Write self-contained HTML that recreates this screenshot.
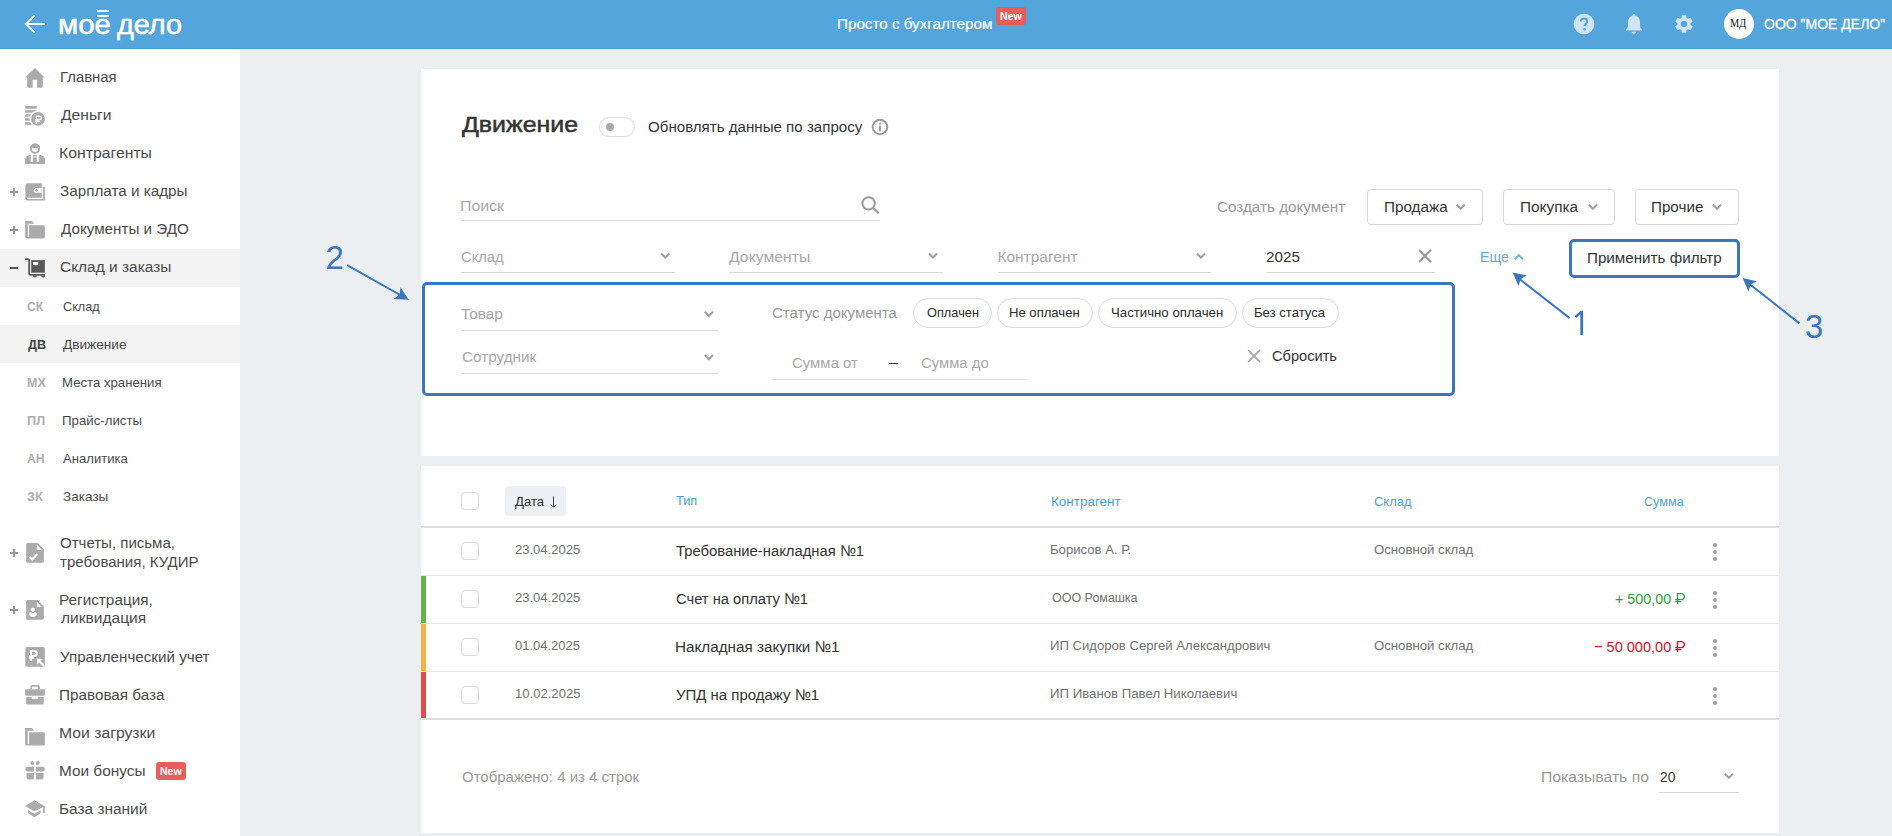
<!DOCTYPE html>
<html><head><meta charset="utf-8"><style>
html,body{margin:0;padding:0;width:1892px;height:836px;overflow:hidden;background:#ebeff1}
body{position:relative;font-family:'Liberation Sans',sans-serif}
.t{position:absolute;white-space:pre;transform-origin:0 0}
svg{display:block}
</style></head><body>
<div style="position:absolute;left:0px;top:0px;width:1892px;height:49px;background:#54a5dc"></div>
<div style="position:absolute;left:0px;top:48px;width:1892px;height:1px;background:#4a9fd8"></div>
<svg style="position:absolute;left:22px;top:12px" width="26" height="24" viewBox="0 0 26 24"><path d="M12.6 3.4 L4 12 L12.6 20.6 M4 12 H23" fill="none" stroke="#fff" stroke-width="2"/></svg>
<div class="t" id="t0" style="left:58.15px;top:5.32px;font-size:28.5px;line-height:39px;font-family:'Liberation Sans',sans-serif;font-weight:400;color:#fff;transform:scaleX(1.0287);-webkit-text-stroke:0.6px #fff;">мое</div>
<div class="t" id="t1" style="left:117.21px;top:5.32px;font-size:28.5px;line-height:39px;font-family:'Liberation Sans',sans-serif;font-weight:400;color:#fff;transform:scaleX(1.0105);-webkit-text-stroke:0.6px #fff;">дело</div>
<div style="position:absolute;left:97px;top:10px;width:12px;height:2px;background:#fff"></div>
<div style="position:absolute;left:97px;top:14.6px;width:12px;height:2.0000000000000018px;background:#fff"></div>
<div class="t" id="t2" style="left:837.08px;top:13.23px;font-size:15.5px;line-height:22px;font-family:'Liberation Sans',sans-serif;font-weight:400;color:#fff;transform:scaleX(0.9805);-webkit-text-stroke:0.2px #fff;">Просто с бухгалтером</div>
<div style="position:absolute;left:996px;top:7px;width:30px;height:18px;background:#e5605c;border-radius:3px"></div>
<div class="t" id="t3" style="left:999.91px;top:7.59px;font-size:11px;line-height:16px;font-family:'Liberation Sans',sans-serif;font-weight:700;color:#fff;transform:scaleX(0.9661);">New</div>
<svg style="position:absolute;left:1573px;top:13px" width="22" height="22" viewBox="0 0 22 22"><circle cx="11" cy="11" r="10.3" fill="#cfe4f5"/><path d="M7.8 8.6 C7.8 6.6 9.2 5.4 11 5.4 C12.9 5.4 14.2 6.6 14.2 8.3 C14.2 10.4 11.6 10.6 11.6 13" fill="none" stroke="#54a5dc" stroke-width="2"/><circle cx="11.6" cy="16.2" r="1.2" fill="#54a5dc"/></svg>
<svg style="position:absolute;left:1624px;top:13px" width="20" height="22" viewBox="0 0 20 22"><path d="M10 1 C11 1 11.3 1.8 11.3 2.4 C14.3 3.2 16 5.8 16 9 V14.2 L18.2 16.6 V17.6 H1.8 V16.6 L4 14.2 V9 C4 5.8 5.7 3.2 8.7 2.4 C8.7 1.8 9 1 10 1 Z" fill="#cfe4f5"/><path d="M7.6 18.8 H12.4 C12.2 20 11.2 20.8 10 20.8 C8.8 20.8 7.8 20 7.6 18.8Z" fill="#cfe4f5"/></svg>
<svg style="position:absolute;left:1673px;top:13px" width="22" height="22" viewBox="0 0 24 24"><path fill="#cfe4f5" d="M19.14 12.94c.04-.3.06-.61.06-.94 0-.32-.02-.64-.07-.94l2.03-1.58a.49.49 0 0 0 .12-.61l-1.92-3.32a.488.488 0 0 0-.59-.22l-2.39.96c-.5-.38-1.03-.7-1.62-.94l-.36-2.54a.484.484 0 0 0-.48-.41h-3.84c-.24 0-.43.17-.47.41l-.36 2.54c-.59.24-1.13.57-1.62.94l-2.39-.96c-.22-.08-.47 0-.59.22L2.74 8.87c-.12.21-.08.47.12.61l2.03 1.58c-.05.3-.09.63-.09.94s.02.64.07.94l-2.03 1.58a.49.49 0 0 0-.12.61l1.92 3.32c.12.22.37.29.59.22l2.39-.96c.5.38 1.03.7 1.62.94l.36 2.54c.05.24.24.41.48.41h3.84c.24 0 .44-.17.47-.41l.36-2.54c.59-.24 1.13-.56 1.62-.94l2.39.96c.22.08.47 0 .59-.22l1.92-3.32c.12-.22.07-.47-.12-.61l-2.01-1.58zM12 15.6c-1.98 0-3.6-1.62-3.6-3.6s1.62-3.6 3.6-3.6 3.6 1.62 3.6 3.6-1.62 3.6-3.6 3.6z"/></svg>
<div style="position:absolute;left:1724px;top:9px;width:30px;height:30px;border-radius:50%;background:#fff"></div>
<div class="t" id="t4" style="left:1729.97px;top:14.92px;font-size:11.5px;line-height:16px;font-family:'Liberation Serif',serif;font-weight:400;color:#111;transform:scaleX(0.9020);">МД</div>
<div class="t" id="t5" style="left:1764.37px;top:13.03px;font-size:15.5px;line-height:22px;font-family:'Liberation Sans',sans-serif;font-weight:400;color:#fff;transform:scaleX(0.9034);-webkit-text-stroke:0.3px #fff;">ООО "МОЕ ДЕЛО"</div>
<div style="position:absolute;left:0px;top:49px;width:240px;height:787px;background:#fff"></div>
<div style="position:absolute;left:0px;top:249px;width:240px;height:38px;background:#f3f3f3"></div>
<div style="position:absolute;left:0px;top:325px;width:240px;height:38px;background:#f3f3f3"></div>
<div class="t" id="t6" style="left:60.10px;top:66.33px;font-size:15.5px;line-height:22px;font-family:'Liberation Sans',sans-serif;font-weight:400;color:#4a4a4a;transform:scaleX(0.9594);">Главная</div>
<div class="t" id="t7" style="left:60.62px;top:104.33px;font-size:15.5px;line-height:22px;font-family:'Liberation Sans',sans-serif;font-weight:400;color:#4a4a4a;transform:scaleX(1.0085);">Деньги</div>
<div class="t" id="t8" style="left:59.44px;top:142.33px;font-size:15.5px;line-height:22px;font-family:'Liberation Sans',sans-serif;font-weight:400;color:#4a4a4a;transform:scaleX(1.0185);">Контрагенты</div>
<div class="t" id="t9" style="left:60.16px;top:180.33px;font-size:15.5px;line-height:22px;font-family:'Liberation Sans',sans-serif;font-weight:400;color:#4a4a4a;transform:scaleX(0.9836);">Зарплата и кадры</div>
<div class="t" id="t10" style="left:60.62px;top:218.33px;font-size:15.5px;line-height:22px;font-family:'Liberation Sans',sans-serif;font-weight:400;color:#4a4a4a;transform:scaleX(0.9807);">Документы и ЭДО</div>
<div class="t" id="t11" style="left:59.92px;top:256.33px;font-size:15.5px;line-height:22px;font-family:'Liberation Sans',sans-serif;font-weight:400;color:#4a4a4a;transform:scaleX(0.9973);">Склад и заказы</div>
<div class="t" id="t12" style="left:60.02px;top:531.83px;font-size:15.5px;line-height:22px;font-family:'Liberation Sans',sans-serif;font-weight:400;color:#4a4a4a;transform:scaleX(0.9688);">Отчеты, письма,</div>
<div class="t" id="t13" style="left:60.47px;top:550.73px;font-size:15.5px;line-height:22px;font-family:'Liberation Sans',sans-serif;font-weight:400;color:#4a4a4a;transform:scaleX(0.9696);">требования, КУДИР</div>
<div class="t" id="t14" style="left:59.47px;top:588.83px;font-size:15.5px;line-height:22px;font-family:'Liberation Sans',sans-serif;font-weight:400;color:#4a4a4a;transform:scaleX(0.9881);">Регистрация,</div>
<div class="t" id="t15" style="left:60.61px;top:607.43px;font-size:15.5px;line-height:22px;font-family:'Liberation Sans',sans-serif;font-weight:400;color:#4a4a4a;transform:scaleX(1.0020);">ликвидация</div>
<div class="t" id="t16" style="left:60.24px;top:645.93px;font-size:15.5px;line-height:22px;font-family:'Liberation Sans',sans-serif;font-weight:400;color:#4a4a4a;transform:scaleX(0.9787);">Управленческий учет</div>
<div class="t" id="t17" style="left:59.48px;top:683.93px;font-size:15.5px;line-height:22px;font-family:'Liberation Sans',sans-serif;font-weight:400;color:#4a4a4a;transform:scaleX(0.9853);">Правовая база</div>
<div class="t" id="t18" style="left:59.43px;top:721.93px;font-size:15.5px;line-height:22px;font-family:'Liberation Sans',sans-serif;font-weight:400;color:#4a4a4a;transform:scaleX(1.0147);">Мои загрузки</div>
<div class="t" id="t19" style="left:59.46px;top:759.93px;font-size:15.5px;line-height:22px;font-family:'Liberation Sans',sans-serif;font-weight:400;color:#4a4a4a;transform:scaleX(0.9912);">Мои бонусы</div>
<div class="t" id="t20" style="left:59.47px;top:797.93px;font-size:15.5px;line-height:22px;font-family:'Liberation Sans',sans-serif;font-weight:400;color:#4a4a4a;transform:scaleX(0.9934);">База знаний</div>
<div class="t" id="t21" style="left:27.19px;top:298.27px;font-size:12.5px;line-height:18px;font-family:'Liberation Sans',sans-serif;font-weight:700;color:#adadad;transform:scaleX(0.9666);">СК</div>
<div class="t" id="t22" style="left:63.12px;top:297.46px;font-size:13.4px;line-height:19px;font-family:'Liberation Sans',sans-serif;font-weight:400;color:#4a4a4a;transform:scaleX(0.9454);">Склад</div>
<div class="t" id="t23" style="left:27.56px;top:336.27px;font-size:12.5px;line-height:18px;font-family:'Liberation Sans',sans-serif;font-weight:700;color:#444;transform:scaleX(1.0093);">ДВ</div>
<div class="t" id="t24" style="left:62.73px;top:335.46px;font-size:13.4px;line-height:19px;font-family:'Liberation Sans',sans-serif;font-weight:400;color:#4a4a4a;transform:scaleX(1.0183);">Движение</div>
<div class="t" id="t25" style="left:26.88px;top:374.27px;font-size:12.5px;line-height:18px;font-family:'Liberation Sans',sans-serif;font-weight:700;color:#adadad;transform:scaleX(1.0029);">МХ</div>
<div class="t" id="t26" style="left:61.74px;top:373.46px;font-size:13.4px;line-height:19px;font-family:'Liberation Sans',sans-serif;font-weight:400;color:#4a4a4a;transform:scaleX(0.9841);">Места хранения</div>
<div class="t" id="t27" style="left:26.86px;top:412.27px;font-size:12.5px;line-height:18px;font-family:'Liberation Sans',sans-serif;font-weight:700;color:#adadad;transform:scaleX(1.0192);">ПЛ</div>
<div class="t" id="t28" style="left:61.74px;top:411.46px;font-size:13.4px;line-height:19px;font-family:'Liberation Sans',sans-serif;font-weight:400;color:#4a4a4a;transform:scaleX(0.9901);">Прайс-листы</div>
<div class="t" id="t29" style="left:27.36px;top:450.27px;font-size:12.5px;line-height:18px;font-family:'Liberation Sans',sans-serif;font-weight:700;color:#adadad;transform:scaleX(0.9709);">АН</div>
<div class="t" id="t30" style="left:62.80px;top:449.46px;font-size:13.4px;line-height:19px;font-family:'Liberation Sans',sans-serif;font-weight:400;color:#4a4a4a;transform:scaleX(0.9785);">Аналитика</div>
<div class="t" id="t31" style="left:27.29px;top:488.27px;font-size:12.5px;line-height:18px;font-family:'Liberation Sans',sans-serif;font-weight:700;color:#adadad;transform:scaleX(1.0191);">ЗК</div>
<div class="t" id="t32" style="left:63.32px;top:487.46px;font-size:13.4px;line-height:19px;font-family:'Liberation Sans',sans-serif;font-weight:400;color:#4a4a4a;transform:scaleX(1.0140);">Заказы</div>
<div style="position:absolute;left:10px;top:191.39999999999998px;width:8px;height:1.6000000000000227px;background:#999"></div>
<div style="position:absolute;left:13.2px;top:188.2px;width:1.6000000000000014px;height:8.0px;background:#999"></div>
<div style="position:absolute;left:10px;top:229.39999999999998px;width:8px;height:1.6000000000000227px;background:#999"></div>
<div style="position:absolute;left:13.2px;top:226.2px;width:1.6000000000000014px;height:8.0px;background:#999"></div>
<div style="position:absolute;left:10px;top:552.2px;width:8px;height:1.599999999999909px;background:#999"></div>
<div style="position:absolute;left:13.2px;top:549px;width:1.6000000000000014px;height:8px;background:#999"></div>
<div style="position:absolute;left:10px;top:609.2px;width:8px;height:1.599999999999909px;background:#999"></div>
<div style="position:absolute;left:13.2px;top:606px;width:1.6000000000000014px;height:8px;background:#999"></div>
<div style="position:absolute;left:10px;top:267.2px;width:8px;height:1.6000000000000227px;background:#555"></div>
<svg style="position:absolute;left:22px;top:64px" width="26" height="26" viewBox="0 0 26 26"><path d="M13 4 L22.6 13.5 H20.8 V21.4 C20.8 22.8 19.8 23.8 18.4 23.8 H15.2 V15.7 H10.7 V23.8 H7.5 C6.1 23.8 5.13 22.8 5.13 21.4 V13.5 H3.1 Z" fill="#ababab"/></svg>
<svg style="position:absolute;left:22px;top:102px" width="26" height="26" viewBox="0 0 26 26"><rect x="3.1" y="4.04" width="11.7" height="2.65" fill="#ababab"/><rect x="3.1" y="8.2" width="11.7" height="2.5" fill="#ababab"/><rect x="3.1" y="12.3" width="11.7" height="2.3" fill="#ababab"/><rect x="3.1" y="16.2" width="11.7" height="2.5" fill="#ababab"/><rect x="3.1" y="20.2" width="11.7" height="2.7" fill="#ababab"/><circle cx="16" cy="16.9" r="8.5" fill="#fff"/><circle cx="16" cy="16.9" r="6.85" fill="#ababab"/><path d="M14.45 21.8 V14.15 H17.1 C18.6 14.15 19.2 15 19.2 15.95 C19.2 16.9 18.6 17.75 17.1 17.75 H12.9 M12.9 19.45 H18" fill="none" stroke="#fff" stroke-width="1.45"/></svg>
<svg style="position:absolute;left:22px;top:140px" width="26" height="26" viewBox="0 0 26 26"><circle cx="13.06" cy="8.86" r="4.05" fill="none" stroke="#ababab" stroke-width="1.9"/><path d="M8.1 7.9 A5 5 0 0 1 18 7.9 Z" fill="#ababab"/><path d="M3.1 24 V20 C3.1 17.2 5.2 14.9 8.2 14.9 H17.9 C20.9 14.9 23 17.2 23 20 V24 Z" fill="#ababab"/><path d="M8.7 14.5 H11 V21.2 C11 21.7 10.6 22 10.1 22 H9.6 C9.1 22 8.7 21.7 8.7 21.2Z M14.8 14.5 H17.1 V21.2 C17.1 21.7 16.7 22 16.2 22 H15.7 C15.2 22 14.8 21.7 14.8 21.2Z" fill="#fff"/><rect x="11" y="16.5" width="3.8" height="0.9" fill="#fff"/></svg>
<svg style="position:absolute;left:22px;top:179px" width="26" height="26" viewBox="0 0 26 26"><path d="M5.4 4.2 H19.75 V18.7 H5 V19.9 H21.15 V8.1 H22.9 V21.6 H5.4 Q3.3 21.6 3.3 19.5 V6.3 Q3.3 4.2 5.4 4.2 Z" fill="#ababab"/><path d="M14.2 9 H19.75 V13.85 H14.2 C12.9 13.85 11.8 12.8 11.8 11.4 C11.8 10.05 12.9 9 14.2 9Z" fill="#fff"/><circle cx="14.5" cy="11.4" r="1.35" fill="#ababab"/></svg>
<svg style="position:absolute;left:22px;top:217px" width="26" height="26" viewBox="0 0 26 26"><path d="M3.1 4.04 H9.8 L12.3 6.7 H5.75 V19.9 H7.15 V8.24 H21.3 Q22.86 8.24 22.86 9.8 V19.9 Q22.86 21.6 21.1 21.6 H5.1 Q3.1 21.6 3.1 19.6 Z" fill="#ababab"/></svg>
<svg style="position:absolute;left:22px;top:255px" width="26" height="26" viewBox="0 0 26 26"><path d="M3.1 4.04 H6 Q7.15 4.04 7.15 5.2 V18.7 Q7.15 19.85 8.3 19.85 H22.9" fill="none" stroke="#595959" stroke-width="1.8"/><rect x="9.2" y="5.13" width="13.66" height="12.57" fill="#595959"/><rect x="11" y="7" width="5.2" height="3.1" fill="#fff"/><path d="M11 20.6 A1.95 1.95 0 0 0 14.9 20.6Z M19.2 20.6 A1.95 1.95 0 0 0 23.1 20.6Z" fill="#595959"/></svg>
<svg style="position:absolute;left:22px;top:540px" width="26" height="26" viewBox="0 0 26 26"><path d="M5.7 3.1 H15.7 L21.8 9.3 V21.2 Q21.8 22.7 20.3 22.7 H5.7 Q4.2 22.7 4.2 21.2 V4.6 Q4.2 3.1 5.7 3.1Z" fill="#ababab"/><path d="M14.9 4.7 V10.1 H19.9Z" fill="#fff"/><path d="M7.7 17.1 L10.1 19.4 L15.4 13.9" fill="none" stroke="#fff" stroke-width="2.1"/></svg>
<svg style="position:absolute;left:22px;top:597px" width="26" height="26" viewBox="0 0 26 26"><path d="M5.7 3.1 H15.7 L21.8 9.3 V21.2 Q21.8 22.7 20.3 22.7 H5.7 Q4.2 22.7 4.2 21.2 V4.6 Q4.2 3.1 5.7 3.1Z" fill="#ababab"/><path d="M14.9 4.7 V10.1 H19.9Z" fill="#fff"/><circle cx="10.9" cy="12.6" r="2.05" fill="#fff"/><path d="M6.8 17 C7 15.7 7.9 14.9 8.8 14.9 L10.9 16.5 L13 14.9 C13.9 14.9 14.8 15.7 14.95 17 C14.9 18.8 13 19.9 10.9 19.9 C8.8 19.9 6.8 18.8 6.8 17Z" fill="#fff"/></svg>
<svg style="position:absolute;left:22px;top:643px" width="26" height="26" viewBox="0 0 26 26"><rect x="3.27" y="4.04" width="19.6" height="19.76" rx="1.8" fill="#ababab"/><path d="M8.9 18 V8 H12.2 C14 8 14.9 9.1 14.9 10.45 C14.9 11.8 14 12.9 12.2 12.9 H6.85 M6.85 15 H12" fill="none" stroke="#fff" stroke-width="2"/><path d="M22 22.7 L16.3 17" stroke="#fff" stroke-width="2.1"/><path d="M14.9 15.55 L20.6 16 L15.1 21.6Z" fill="#fff"/></svg>
<svg style="position:absolute;left:22px;top:682px" width="26" height="26" viewBox="0 0 26 26"><path d="M9.2 7.3 V4.9 Q9.2 3.9 10.2 3.9 H16.1 Q17.1 3.9 17.1 4.9 V7.3" fill="none" stroke="#ababab" stroke-width="1.6"/><path d="M3.1 7.15 H22.86 V12.2 Q22.86 13.7 21.36 13.7 H4.6 Q3.1 13.7 3.1 12.2Z" fill="#ababab"/><path d="M4.2 15.1 H9.8 V17.1 H16.2 V15.1 H21.8 V21.05 Q21.8 22.55 20.3 22.55 H5.7 Q4.2 22.55 4.2 21.05Z" fill="#ababab"/></svg>
<svg style="position:absolute;left:22px;top:724px" width="26" height="26" viewBox="0 0 26 26"><path d="M3.1 4.04 H9.8 L12.3 6.7 H5.75 V19.9 H7.15 V8.24 H21.3 Q22.86 8.24 22.86 9.8 V19.9 Q22.86 21.6 21.1 21.6 H5.1 Q3.1 21.6 3.1 19.6 Z" fill="#ababab"/></svg>
<svg style="position:absolute;left:22px;top:758px" width="26" height="26" viewBox="0 0 26 26"><path d="M12 6.7 H10.1 A1.85 1.85 0 1 1 12 4.9Z M14 6.7 H15.9 A1.85 1.85 0 1 0 14 4.9Z" fill="#ababab"/><path d="M12 8.86 H5.6 Q3.27 8.86 3.27 11.18 Q3.27 13.5 5.6 13.5 H12Z M14 8.86 H20.5 Q22.86 8.86 22.86 11.18 Q22.86 13.5 20.5 13.5 H14Z" fill="#ababab"/><path d="M4.5 15.1 H12 V21.6 H7 Q4.5 21.6 4.5 19.1Z M14 15.1 H21.6 V19.1 Q21.6 21.6 19.1 21.6 H14Z" fill="#ababab"/></svg>
<svg style="position:absolute;left:22px;top:796px" width="26" height="26" viewBox="0 0 26 26"><path d="M3.1 10 L12.44 4.35 L22.86 10.2 L12.44 15.2Z" fill="#ababab"/><rect x="21.15" y="10" width="1.71" height="7" fill="#ababab"/><path d="M5.9 14.3 L12.44 17.7 L18.66 14.3 V17 L12.44 21.15 L5.9 17Z" fill="#ababab"/></svg>
<div style="position:absolute;left:156px;top:762px;width:30px;height:18px;background:#e5605c;border-radius:3px"></div>
<div class="t" id="t33" style="left:159.82px;top:762.99px;font-size:11px;line-height:16px;font-family:'Liberation Sans',sans-serif;font-weight:700;color:#fff;transform:scaleX(0.9569);">New</div>
<div style="position:absolute;left:240px;top:49px;width:1652px;height:787px;background:#ebeff1"></div>
<div style="position:absolute;left:240px;top:49px;width:1652px;height:1px;background:#f1f2f3"></div>
<div style="position:absolute;left:421px;top:69px;width:1358px;height:387px;background:#fff"></div>
<div style="position:absolute;left:421px;top:466px;width:1358px;height:367px;background:#fff"></div>
<div class="t" id="t34" style="left:462.39px;top:110.28px;font-size:22px;line-height:30px;font-family:'Liberation Sans',sans-serif;font-weight:400;color:#333;transform:scaleX(1.1316);-webkit-text-stroke:0.5px #333;">Движение</div>
<div style="position:absolute;left:599px;top:117px;width:36px;height:20px;border:1px solid #dcdcdc;border-radius:10px;box-sizing:border-box;background:#fff"></div>
<div style="position:absolute;left:606px;top:123px;width:8px;height:8px;border-radius:50%;background:#a9a9a9"></div>
<div class="t" id="t35" style="left:647.72px;top:115.53px;font-size:15.5px;line-height:22px;font-family:'Liberation Sans',sans-serif;font-weight:400;color:#333;transform:scaleX(0.9743);">Обновлять данные по запросу</div>
<svg style="position:absolute;left:871px;top:118px" width="18" height="18" viewBox="0 0 18 18"><circle cx="9" cy="9" r="7.3" fill="none" stroke="#9a9a9a" stroke-width="1.9"/><rect x="8.1" y="7.6" width="1.8" height="5.6" fill="#9a9a9a"/><rect x="8.1" y="4.7" width="1.8" height="1.8" fill="#9a9a9a"/></svg>
<div class="t" id="t36" style="left:460.32px;top:194.53px;font-size:15.5px;line-height:22px;font-family:'Liberation Sans',sans-serif;font-weight:400;color:#a8a8a8;transform:scaleX(1.0228);">Поиск</div>
<div style="position:absolute;left:461px;top:220px;width:419px;height:1.3000000000000114px;background:#dadada"></div>
<svg style="position:absolute;left:859px;top:195px" width="22" height="20" viewBox="0 0 22 20"><circle cx="9.6" cy="8.4" r="6.2" fill="none" stroke="#9a9a9a" stroke-width="2"/><path d="M14 12.8 L19.6 18.2" stroke="#9a9a9a" stroke-width="2.2"/></svg>
<div class="t" id="t37" style="left:1217.43px;top:196.33px;font-size:15.5px;line-height:22px;font-family:'Liberation Sans',sans-serif;font-weight:400;color:#999;transform:scaleX(0.9833);">Создать документ</div>
<div style="position:absolute;left:1367px;top:189px;width:116px;height:36px;border:1px solid #d9d9d9;border-radius:4px;box-sizing:border-box"></div>
<div class="t" id="t38" style="left:1384.08px;top:196.33px;font-size:15.5px;line-height:22px;font-family:'Liberation Sans',sans-serif;font-weight:400;color:#333;transform:scaleX(0.9833);">Продажа</div>
<svg style="position:absolute;left:0;top:0;overflow:visible" width="1" height="1"><path d="M1456.65 204.55 L1460.75 208.65 L1464.85 204.55" fill="none" stroke="#a0a0a0" stroke-width="2.1"/></svg>
<div style="position:absolute;left:1503px;top:189px;width:112px;height:36px;border:1px solid #d9d9d9;border-radius:4px;box-sizing:border-box"></div>
<div class="t" id="t39" style="left:1519.68px;top:196.33px;font-size:15.5px;line-height:22px;font-family:'Liberation Sans',sans-serif;font-weight:400;color:#333;transform:scaleX(0.9926);">Покупка</div>
<svg style="position:absolute;left:0;top:0;overflow:visible" width="1" height="1"><path d="M1588.75 204.55 L1592.85 208.65 L1596.95 204.55" fill="none" stroke="#a0a0a0" stroke-width="2.1"/></svg>
<div style="position:absolute;left:1635px;top:189px;width:104px;height:36px;border:1px solid #d9d9d9;border-radius:4px;box-sizing:border-box"></div>
<div class="t" id="t40" style="left:1650.78px;top:196.33px;font-size:15.5px;line-height:22px;font-family:'Liberation Sans',sans-serif;font-weight:400;color:#333;transform:scaleX(0.9800);">Прочие</div>
<svg style="position:absolute;left:0;top:0;overflow:visible" width="1" height="1"><path d="M1712.90 204.55 L1717.00 208.65 L1721.10 204.55" fill="none" stroke="#a0a0a0" stroke-width="2.1"/></svg>
<div class="t" id="t41" style="left:460.95px;top:246.13px;font-size:15.5px;line-height:22px;font-family:'Liberation Sans',sans-serif;font-weight:400;color:#a8a8a8;transform:scaleX(0.9515);">Склад</div>
<div style="position:absolute;left:461px;top:271.5px;width:214px;height:1.3000000000000114px;background:#dadada"></div>
<svg style="position:absolute;left:0;top:0;overflow:visible" width="1" height="1"><path d="M661.15 253.45 L665.25 257.55 L669.35 253.45" fill="none" stroke="#a0a0a0" stroke-width="2.1"/></svg>
<div class="t" id="t42" style="left:729.42px;top:246.13px;font-size:15.5px;line-height:22px;font-family:'Liberation Sans',sans-serif;font-weight:400;color:#a8a8a8;transform:scaleX(1.0173);">Документы</div>
<div style="position:absolute;left:729px;top:271.5px;width:214px;height:1.3000000000000114px;background:#dadada"></div>
<svg style="position:absolute;left:0;top:0;overflow:visible" width="1" height="1"><path d="M928.90 253.45 L933.00 257.55 L937.10 253.45" fill="none" stroke="#a0a0a0" stroke-width="2.1"/></svg>
<div class="t" id="t43" style="left:997.45px;top:246.13px;font-size:15.5px;line-height:22px;font-family:'Liberation Sans',sans-serif;font-weight:400;color:#a8a8a8;">Контрагент</div>
<div style="position:absolute;left:998px;top:271.5px;width:213px;height:1.3000000000000114px;background:#dadada"></div>
<svg style="position:absolute;left:0;top:0;overflow:visible" width="1" height="1"><path d="M1196.80 253.45 L1200.90 257.55 L1205.00 253.45" fill="none" stroke="#a0a0a0" stroke-width="2.1"/></svg>
<div class="t" id="t44" style="left:1266.19px;top:245.53px;font-size:15.5px;line-height:22px;font-family:'Liberation Sans',sans-serif;font-weight:400;color:#333;transform:scaleX(0.9813);">2025</div>
<div style="position:absolute;left:1266px;top:271.5px;width:169px;height:1.3000000000000114px;background:#dadada"></div>
<svg style="position:absolute;left:1418px;top:249px" width="14" height="14" viewBox="0 0 14 14"><path d="M1 1 L13 13 M13 1 L1 13" stroke="#9a9a9a" stroke-width="2"/></svg>
<div class="t" id="t45" style="left:1480.44px;top:246.43px;font-size:15.5px;line-height:22px;font-family:'Liberation Sans',sans-serif;font-weight:400;color:#5badde;transform:scaleX(0.9195);">Еще</div>
<svg style="position:absolute;left:0;top:0;overflow:visible" width="1" height="1"><path d="M1514.75 259.35 L1518.85 255.25 L1522.95 259.35" fill="none" stroke="#6cb4dc" stroke-width="2"/></svg>
<div style="position:absolute;left:1569px;top:239px;width:171px;height:39px;border:3px solid #3a77bf;border-radius:5px;box-sizing:border-box"></div>
<div class="t" id="t46" style="left:1586.68px;top:247.13px;font-size:15.5px;line-height:22px;font-family:'Liberation Sans',sans-serif;font-weight:400;color:#333;transform:scaleX(0.9798);">Применить фильтр</div>
<div style="position:absolute;left:422px;top:282px;width:1032.5px;height:113.5px;border:3px solid #3a77bf;border-radius:5px;box-sizing:border-box"></div>
<div class="t" id="t47" style="left:461.30px;top:303.13px;font-size:15.5px;line-height:22px;font-family:'Liberation Sans',sans-serif;font-weight:400;color:#a8a8a8;transform:scaleX(0.9901);">Товар</div>
<div style="position:absolute;left:461px;top:329.8px;width:258px;height:1.3000000000000114px;background:#dadada"></div>
<svg style="position:absolute;left:0;top:0;overflow:visible" width="1" height="1"><path d="M704.80 311.75 L708.90 315.85 L713.00 311.75" fill="none" stroke="#a0a0a0" stroke-width="2.1"/></svg>
<div class="t" id="t48" style="left:461.83px;top:346.23px;font-size:15.5px;line-height:22px;font-family:'Liberation Sans',sans-serif;font-weight:400;color:#a8a8a8;transform:scaleX(0.9861);">Сотрудник</div>
<div style="position:absolute;left:461px;top:372.6px;width:258px;height:1.2999999999999545px;background:#dadada"></div>
<svg style="position:absolute;left:0;top:0;overflow:visible" width="1" height="1"><path d="M704.80 355.05 L708.90 359.15 L713.00 355.05" fill="none" stroke="#a0a0a0" stroke-width="2.1"/></svg>
<div class="t" id="t49" style="left:772.03px;top:302.03px;font-size:15.5px;line-height:22px;font-family:'Liberation Sans',sans-serif;font-weight:400;color:#999;transform:scaleX(0.9696);">Статус документа</div>
<div style="position:absolute;left:913px;top:298px;width:79px;height:30px;border:1px solid #dcdcdc;border-radius:15px;box-sizing:border-box"></div>
<div class="t" id="t50" style="left:926.61px;top:303.36px;font-size:13.4px;line-height:19px;font-family:'Liberation Sans',sans-serif;font-weight:400;color:#2b2b2b;transform:scaleX(0.9538);">Оплачен</div>
<div style="position:absolute;left:997px;top:298px;width:95.5px;height:30px;border:1px solid #dcdcdc;border-radius:15px;box-sizing:border-box"></div>
<div class="t" id="t51" style="left:1009.24px;top:303.36px;font-size:13.4px;line-height:19px;font-family:'Liberation Sans',sans-serif;font-weight:400;color:#2b2b2b;transform:scaleX(0.9772);">Не оплачен</div>
<div style="position:absolute;left:1098px;top:298px;width:138.5px;height:30px;border:1px solid #dcdcdc;border-radius:15px;box-sizing:border-box"></div>
<div class="t" id="t52" style="left:1111.23px;top:303.36px;font-size:13.4px;line-height:19px;font-family:'Liberation Sans',sans-serif;font-weight:400;color:#2b2b2b;transform:scaleX(0.9866);">Частично оплачен</div>
<div style="position:absolute;left:1242px;top:298px;width:97px;height:30px;border:1px solid #dcdcdc;border-radius:15px;box-sizing:border-box"></div>
<div class="t" id="t53" style="left:1254.45px;top:303.36px;font-size:13.4px;line-height:19px;font-family:'Liberation Sans',sans-serif;font-weight:400;color:#2b2b2b;transform:scaleX(0.9783);">Без статуса</div>
<div class="t" id="t54" style="left:791.95px;top:352.03px;font-size:15.5px;line-height:22px;font-family:'Liberation Sans',sans-serif;font-weight:400;color:#a8a8a8;transform:scaleX(0.9640);">Сумма от</div>
<div style="position:absolute;left:888.5px;top:362.6px;width:9.100000000000023px;height:1.0px;background:#333"></div>
<div class="t" id="t55" style="left:921.24px;top:352.03px;font-size:15.5px;line-height:22px;font-family:'Liberation Sans',sans-serif;font-weight:400;color:#a8a8a8;transform:scaleX(0.9574);">Сумма до</div>
<div style="position:absolute;left:772px;top:378.5px;width:254px;height:1.3000000000000114px;background:#dadada"></div>
<svg style="position:absolute;left:1247px;top:349px" width="14" height="14" viewBox="0 0 14 14"><path d="M1.2 1.2 L12.8 12.8 M12.8 1.2 L1.2 12.8" stroke="#a6a6a6" stroke-width="1.7"/></svg>
<div class="t" id="t56" style="left:1272.44px;top:345.03px;font-size:15.5px;line-height:22px;font-family:'Liberation Sans',sans-serif;font-weight:400;color:#333;transform:scaleX(0.9430);">Сбросить</div>
<div class="t" id="t57" style="left:325.45px;top:235.97px;font-size:33px;line-height:44px;font-family:'Liberation Sans',sans-serif;font-weight:400;color:#3a77bf;">2</div>
<div class="t" id="t58" style="left:1805.19px;top:304.77px;font-size:33px;line-height:44px;font-family:'Liberation Sans',sans-serif;font-weight:400;color:#3a77bf;transform:scaleX(0.9922);">3</div>
<svg style="position:absolute;left:0;top:0;pointer-events:none" width="1892" height="836" viewBox="0 0 1892 836">
<path d="M347.2 265.2 L401 295.5" stroke="#3a77bf" stroke-width="2"/><path d="M408.8 299.7 L400.4 287.3 L399.8 294.2 L393.7 299Z" fill="#3a77bf"/>
<path d="M1569.6 318.1 L1519 278.5" stroke="#3a77bf" stroke-width="2"/><path d="M1580.3 335 V314.2 L1576.2 318.1 L1574.6 316.2 L1580.6 310.8 H1583.1 V335Z" fill="#3a77bf"/><path d="M1512.7 272.4 L1526.9 275.4 L1520.8 278.9 L1518.5 285.9Z" fill="#3a77bf"/>
<path d="M1799.5 323.4 L1749.5 284" stroke="#3a77bf" stroke-width="2"/><path d="M1742.6 278 L1756.8 281.3 L1750.6 284.4 L1748.4 291.6Z" fill="#3a77bf"/>
</svg>
<div style="position:absolute;left:461px;top:492px;width:18px;height:18px;border:1px solid #d9d9d9;border-radius:4px;box-sizing:border-box;background:#fff"></div>
<div style="position:absolute;left:505px;top:486px;width:61px;height:30px;background:#edf0f4;border-radius:4px"></div>
<div class="t" id="t59" style="left:514.93px;top:491.56px;font-size:13.4px;line-height:19px;font-family:'Liberation Sans',sans-serif;font-weight:400;color:#2b2b2b;transform:scaleX(0.9797);">Дата</div>
<svg style="position:absolute;left:549px;top:495px" width="9" height="14" viewBox="0 0 9 14"><path d="M4.5 1.2 V12.2 M2 9.6 L4.5 12.2 L7 9.6" fill="none" stroke="#444" stroke-width="1"/></svg>
<div class="t" id="t60" style="left:675.72px;top:491.46px;font-size:13.4px;line-height:19px;font-family:'Liberation Sans',sans-serif;font-weight:400;color:#4aa2d3;transform:scaleX(0.9476);">Тип</div>
<div class="t" id="t61" style="left:1051.42px;top:491.56px;font-size:13.4px;line-height:19px;font-family:'Liberation Sans',sans-serif;font-weight:400;color:#4aa2d3;transform:scaleX(1.0074);">Контрагент</div>
<div class="t" id="t62" style="left:1373.83px;top:491.56px;font-size:13.4px;line-height:19px;font-family:'Liberation Sans',sans-serif;font-weight:400;color:#4aa2d3;transform:scaleX(0.9656);">Склад</div>
<div class="t" id="t63" style="left:1644.34px;top:491.56px;font-size:13.4px;line-height:19px;font-family:'Liberation Sans',sans-serif;font-weight:400;color:#4aa2d3;transform:scaleX(0.9427);">Сумма</div>
<div style="position:absolute;left:421px;top:526px;width:1358px;height:2px;background:#dedede"></div>
<div style="position:absolute;left:421px;top:575px;width:1358px;height:1px;background:#e6e6e6"></div>
<div style="position:absolute;left:421px;top:623px;width:1358px;height:1px;background:#e6e6e6"></div>
<div style="position:absolute;left:421px;top:671px;width:1358px;height:1px;background:#e6e6e6"></div>
<div style="position:absolute;left:421px;top:718px;width:1358px;height:2px;background:#dedede"></div>
<div style="position:absolute;left:421px;top:576px;width:5px;height:47px;background:#69b04f"></div>
<div style="position:absolute;left:421px;top:624px;width:5px;height:47px;background:#f0b54a"></div>
<div style="position:absolute;left:421px;top:672px;width:5px;height:46px;background:#e04a4f"></div>
<div style="position:absolute;left:461px;top:542px;width:18px;height:18px;border:1px solid #d9d9d9;border-radius:4px;box-sizing:border-box;background:#fff"></div>
<div class="t" id="t64" style="left:514.83px;top:540.26px;font-size:13.4px;line-height:19px;font-family:'Liberation Sans',sans-serif;font-weight:400;color:#707070;transform:scaleX(0.9721);">23.04.2025</div>
<div class="t" id="t65" style="left:675.70px;top:540.03px;font-size:15.5px;line-height:22px;font-family:'Liberation Sans',sans-serif;font-weight:400;color:#333;transform:scaleX(0.9553);">Требование-накладная №1</div>
<div class="t" id="t66" style="left:1050.44px;top:540.06px;font-size:13.4px;line-height:19px;font-family:'Liberation Sans',sans-serif;font-weight:400;color:#707070;transform:scaleX(0.9810);">Борисов А. Р.</div>
<div class="t" id="t67" style="left:1373.90px;top:540.06px;font-size:13.4px;line-height:19px;font-family:'Liberation Sans',sans-serif;font-weight:400;color:#707070;transform:scaleX(0.9841);">Основной склад</div>
<div style="position:absolute;left:1713px;top:542.9px;width:4px;height:4px;border-radius:50%;background:#9c9c9c"></div>
<div style="position:absolute;left:1713px;top:549.9px;width:4px;height:4px;border-radius:50%;background:#9c9c9c"></div>
<div style="position:absolute;left:1713px;top:556.9px;width:4px;height:4px;border-radius:50%;background:#9c9c9c"></div>
<div style="position:absolute;left:461px;top:590px;width:18px;height:18px;border:1px solid #d9d9d9;border-radius:4px;box-sizing:border-box;background:#fff"></div>
<div class="t" id="t68" style="left:514.83px;top:588.26px;font-size:13.4px;line-height:19px;font-family:'Liberation Sans',sans-serif;font-weight:400;color:#707070;transform:scaleX(0.9721);">23.04.2025</div>
<div class="t" id="t69" style="left:676.26px;top:588.03px;font-size:15.5px;line-height:22px;font-family:'Liberation Sans',sans-serif;font-weight:400;color:#333;transform:scaleX(0.9493);">Счет на оплату №1</div>
<div class="t" id="t70" style="left:1051.93px;top:588.06px;font-size:13.4px;line-height:19px;font-family:'Liberation Sans',sans-serif;font-weight:400;color:#707070;transform:scaleX(0.9323);">ООО Ромашка</div>
<div style="position:absolute;left:1713px;top:590.9px;width:4px;height:4px;border-radius:50%;background:#9c9c9c"></div>
<div style="position:absolute;left:1713px;top:597.9px;width:4px;height:4px;border-radius:50%;background:#9c9c9c"></div>
<div style="position:absolute;left:1713px;top:604.9px;width:4px;height:4px;border-radius:50%;background:#9c9c9c"></div>
<div style="position:absolute;left:461px;top:638px;width:18px;height:18px;border:1px solid #d9d9d9;border-radius:4px;box-sizing:border-box;background:#fff"></div>
<div class="t" id="t71" style="left:514.98px;top:636.26px;font-size:13.4px;line-height:19px;font-family:'Liberation Sans',sans-serif;font-weight:400;color:#707070;transform:scaleX(0.9699);">01.04.2025</div>
<div class="t" id="t72" style="left:674.78px;top:636.03px;font-size:15.5px;line-height:22px;font-family:'Liberation Sans',sans-serif;font-weight:400;color:#333;transform:scaleX(0.9835);">Накладная закупки №1</div>
<div class="t" id="t73" style="left:1050.45px;top:636.06px;font-size:13.4px;line-height:19px;font-family:'Liberation Sans',sans-serif;font-weight:400;color:#707070;transform:scaleX(0.9797);">ИП Сидоров Сергей Александрович</div>
<div class="t" id="t74" style="left:1373.90px;top:636.06px;font-size:13.4px;line-height:19px;font-family:'Liberation Sans',sans-serif;font-weight:400;color:#707070;transform:scaleX(0.9841);">Основной склад</div>
<div style="position:absolute;left:1713px;top:638.9px;width:4px;height:4px;border-radius:50%;background:#9c9c9c"></div>
<div style="position:absolute;left:1713px;top:645.9px;width:4px;height:4px;border-radius:50%;background:#9c9c9c"></div>
<div style="position:absolute;left:1713px;top:652.9px;width:4px;height:4px;border-radius:50%;background:#9c9c9c"></div>
<div style="position:absolute;left:461px;top:686px;width:18px;height:18px;border:1px solid #d9d9d9;border-radius:4px;box-sizing:border-box;background:#fff"></div>
<div class="t" id="t75" style="left:514.52px;top:684.26px;font-size:13.4px;line-height:19px;font-family:'Liberation Sans',sans-serif;font-weight:400;color:#707070;transform:scaleX(0.9769);">10.02.2025</div>
<div class="t" id="t76" style="left:675.55px;top:684.03px;font-size:15.5px;line-height:22px;font-family:'Liberation Sans',sans-serif;font-weight:400;color:#333;transform:scaleX(0.9664);">УПД на продажу №1</div>
<div class="t" id="t77" style="left:1050.44px;top:684.06px;font-size:13.4px;line-height:19px;font-family:'Liberation Sans',sans-serif;font-weight:400;color:#707070;transform:scaleX(0.9871);">ИП Иванов Павел Николаевич</div>
<div style="position:absolute;left:1713px;top:686.9px;width:4px;height:4px;border-radius:50%;background:#9c9c9c"></div>
<div style="position:absolute;left:1713px;top:693.9px;width:4px;height:4px;border-radius:50%;background:#9c9c9c"></div>
<div style="position:absolute;left:1713px;top:700.9px;width:4px;height:4px;border-radius:50%;background:#9c9c9c"></div>
<div class="t" id="t78" style="left:1614.77px;top:588.03px;font-size:15.5px;line-height:22px;font-family:'Liberation Sans',sans-serif;font-weight:400;color:#2f9e3b;transform:scaleX(0.9257);">+ 500,00</div>
<svg style="position:absolute;left:1675px;top:593px;overflow:visible" width="10" height="11" viewBox="0 0 10 11"><path d="M2.5 11 V0.65 H6.2 C8.3 0.65 9.35 1.9 9.35 3.6 C9.35 5.3 8.3 6.60 6.2 6.60 H0.2 M0.2 8.58 H6.3" fill="none" stroke="#2f9e3b" stroke-width="1.3"/></svg>
<div class="t" id="t79" style="left:1593.76px;top:635.93px;font-size:15.5px;line-height:22px;font-family:'Liberation Sans',sans-serif;font-weight:400;color:#d6102a;transform:scaleX(0.9388);">− 50 000,00</div>
<svg style="position:absolute;left:1675px;top:641px;overflow:visible" width="10" height="11" viewBox="0 0 10 11"><path d="M2.5 11 V0.65 H6.2 C8.3 0.65 9.35 1.9 9.35 3.6 C9.35 5.3 8.3 6.60 6.2 6.60 H0.2 M0.2 8.58 H6.3" fill="none" stroke="#d6102a" stroke-width="1.3"/></svg>
<div class="t" id="t80" style="left:461.82px;top:766.13px;font-size:15.5px;line-height:22px;font-family:'Liberation Sans',sans-serif;font-weight:400;color:#999;transform:scaleX(0.9663);">Отображено: 4 из 4 строк</div>
<div class="t" id="t81" style="left:1540.74px;top:766.23px;font-size:15.5px;line-height:22px;font-family:'Liberation Sans',sans-serif;font-weight:400;color:#999;transform:scaleX(1.0139);">Показывать по</div>
<div class="t" id="t82" style="left:1659.76px;top:765.63px;font-size:15.5px;line-height:22px;font-family:'Liberation Sans',sans-serif;font-weight:400;color:#333;transform:scaleX(0.8901);">20</div>
<div style="position:absolute;left:1659px;top:791.8px;width:80px;height:1.3000000000000682px;background:#dadada"></div>
<svg style="position:absolute;left:0;top:0;overflow:visible" width="1" height="1"><path d="M1724.75 773.65 L1728.85 777.75 L1732.95 773.65" fill="none" stroke="#a0a0a0" stroke-width="2.1"/></svg>
</body></html>
